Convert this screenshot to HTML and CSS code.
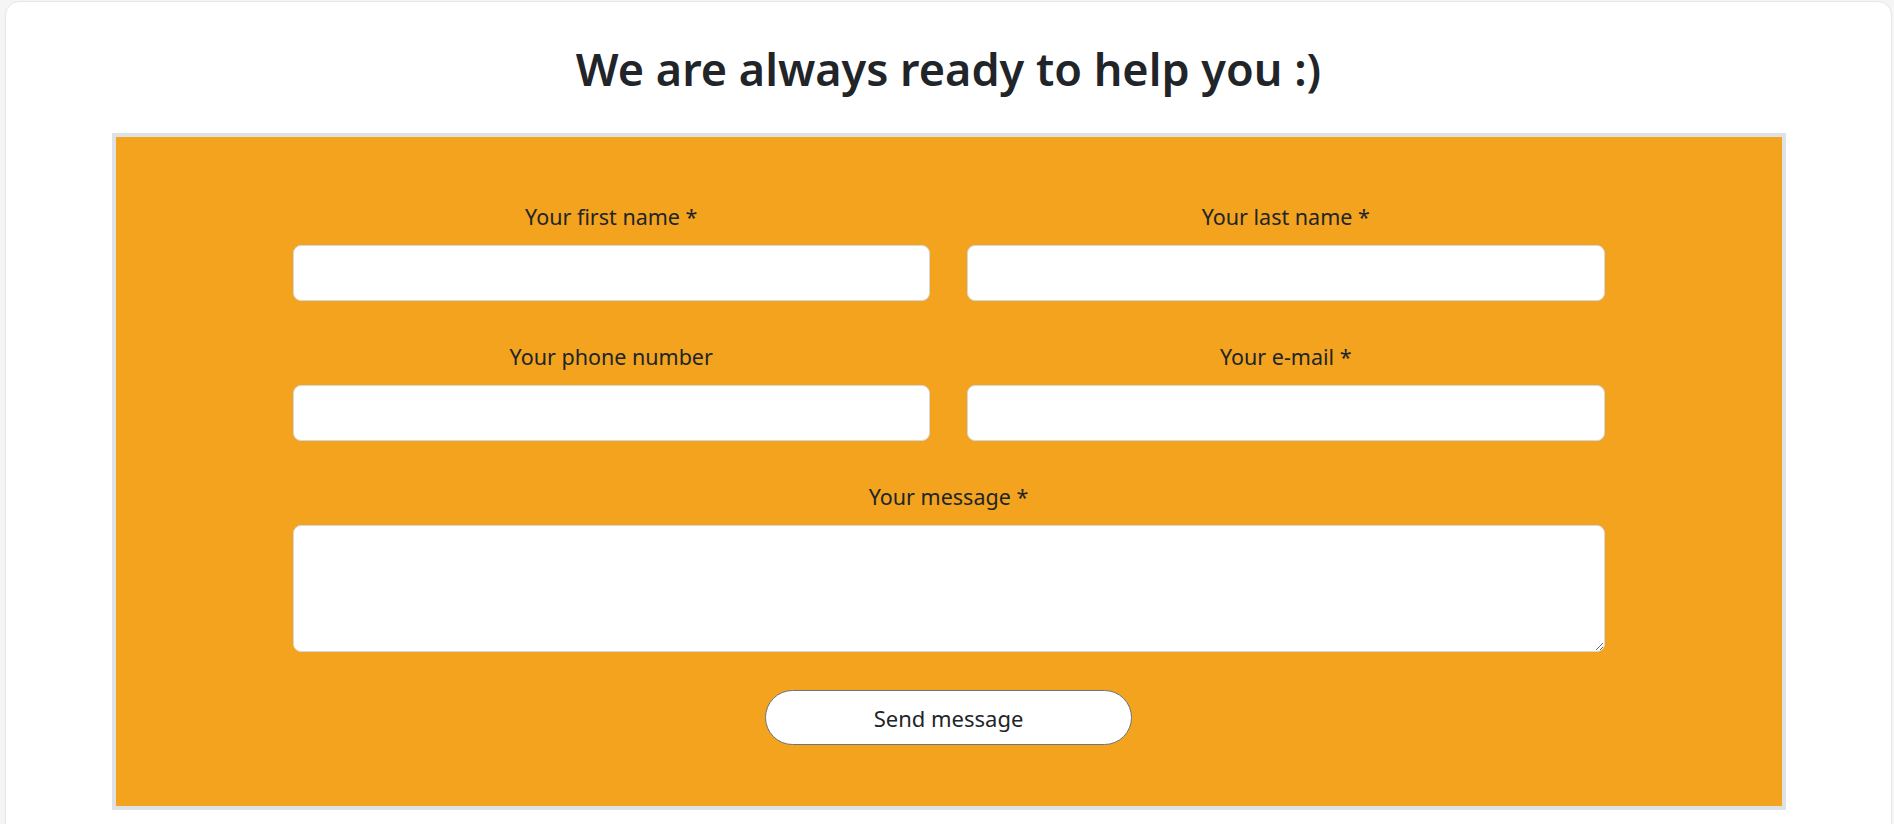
FILE: index.html
```html
<!DOCTYPE html>
<html lang="en">
<head>
<meta charset="utf-8">
<title>Contact</title>
<link rel="stylesheet" href="styles.css">
</head>
<body>
<main class="card">
  <h1 class="title">We are always ready to help you :)</h1>
  <section class="contact-box">
    <form class="contact-form">
      <div class="field">
        <label class="field-label" for="fn">Your first name *</label>
        <input class="field-input" id="fn" type="text">
      </div>
      <div class="field">
        <label class="field-label" for="ln">Your last name *</label>
        <input class="field-input" id="ln" type="text">
      </div>
      <div class="field">
        <label class="field-label" for="ph">Your phone number</label>
        <input class="field-input" id="ph" type="tel">
      </div>
      <div class="field">
        <label class="field-label" for="em">Your e-mail *</label>
        <input class="field-input" id="em" type="email">
      </div>
      <div class="field field-wide">
        <label class="field-label" for="msg">Your message *</label>
        <textarea class="field-input field-area" id="msg"></textarea>
      </div>
      <div class="actions">
        <button class="send-btn" type="button">Send message</button>
      </div>
    </form>
  </section>
</main>
</body>
</html>
```
FILE: styles.css
```css
html, body {
  margin: 0;
  height: 100%;
}
body {
  background: #f5f5f5;
  padding: 1px 2px 0 5px;
  box-sizing: border-box;
  overflow: hidden;
  font-family: "Noto Sans", "Open Sans", sans-serif;
  color: #212529;
}
.card {
  background: #fff;
  border: 1px solid #e6e6e6;
  border-radius: 14px;
  min-height: 900px;
  box-sizing: border-box;
}
.title {
  margin: 0;
  padding-top: 37px;
  text-align: center;
  font-size: 45px;
  font-weight: 600;
  line-height: 60px;
  color: #212529;
}
.contact-box {
  width: 1674px;
  box-sizing: border-box;
  margin: 34px auto 0;
  border: 4px solid #dee2e6;
  background: #f3a31d;
  padding: 65px 0 61px;
}
.contact-form {
  width: 1312px;
  margin: 0 auto;
  display: grid;
  grid-template-columns: 1fr 1fr;
  column-gap: 37px;
  row-gap: 41px;
}
.field {
  display: flex;
  flex-direction: column;
  align-items: stretch;
}
.field-wide {
  grid-column: 1 / -1;
}
.field-label {
  text-align: center;
  font-size: 21.5px;
  line-height: 30px;
  margin-bottom: 13px;
}
.field-input {
  height: 56px;
  box-sizing: border-box;
  border: 1px solid #d4d8dd;
  border-radius: 8px;
  background: #fff;
  font: inherit;
  padding: 0 16px;
  margin: 0;
}
.field-area {
  height: 127px;
  resize: vertical;
  display: block;
  padding: 10px 16px;
}
.actions {
  grid-column: 1 / -1;
  display: flex;
  justify-content: center;
  margin-top: -3px;
}
.send-btn {
  width: 367px;
  height: 55px;
  border: 1px solid #6c757d;
  border-radius: 28px;
  background: #fff;
  color: #212529;
  font-family: inherit;
  font-size: 22px;
  cursor: pointer;
}
```
